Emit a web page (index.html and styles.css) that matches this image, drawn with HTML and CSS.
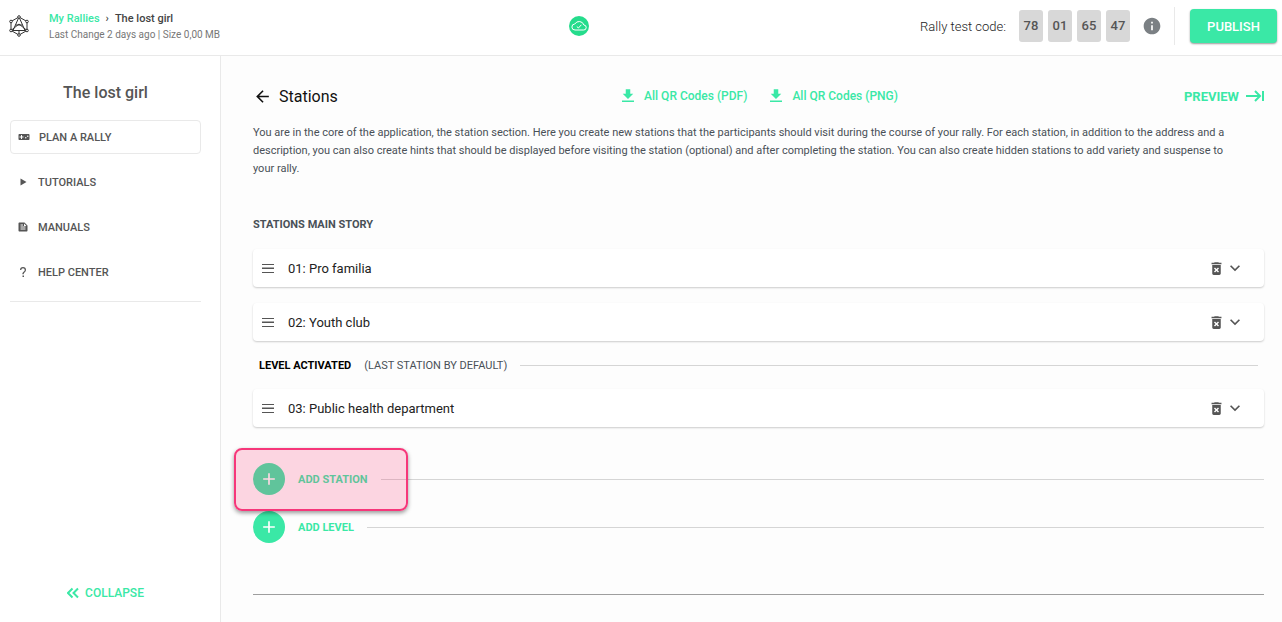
FILE: index.html
```html
<!DOCTYPE html>
<html lang="en">
<head>
    <meta charset="UTF-8">
    <meta name="viewport" content="width=device-width, initial-scale=1.0">
    <title>The lost girl - Stations</title>
    <link rel="stylesheet" href="styles.css">
</head>
<body>
    <!-- shared icons -->
    <svg class="sprite" aria-hidden="true">
        <symbol id="icon-download" viewBox="0 0 24 24"><path d="M19 9h-4V3H9v6H5l7 7 7-7zM4 18v2h16v-2H4z"/></symbol>
        <symbol id="icon-menu" viewBox="0 0 12 9"><path d="M0 0h12v1H0zM0 4h12v1H0zM0 8h12v1H0z"/><path opacity=".5" d="M0 3h12v1H0z"/></symbol>
        <symbol id="icon-delete" viewBox="0 0 24 24"><path d="M6 19c0 1.100.9 2 2 2h8c1.100 0 2-.9 2-2V7H6v12zm2.460-7.120 1.410-1.410L12 12.590l2.120-2.120 1.410 1.410L13.410 14l2.120 2.120-1.410 1.410L12 15.410l-2.120 2.120-1.410-1.410L10.590 14l-2.130-2.120zM15.500 4l-1-1h-5l-1 1H5v2h14V4z"/></symbol>
        <symbol id="icon-chevron" viewBox="0 0 24 24"><path d="M7.410 8.590 12 13.170l4.590-4.580L18 10l-6 6-6-6z"/></symbol>
        <symbol id="icon-plus" viewBox="0 0 24 24"><path d="M19 13h-6v6h-2v-6H5v-2h6V5h2v6h6z"/></symbol>
    </svg>

    <header class="topbar">
        <div class="topbar-left">
            <svg class="logo" viewBox="0 0 22 24" aria-hidden="true">
                <path d="M11 3 3 7.500v9L11 21l8-4.500v-9zM11 3 5 16.500M11 3l6 13.500M3 16.500h16M3 16.500 11 10l8 6.500M7.500 11h7M11 16.500V21"/>
                <g class="logo-nodes">
                    <circle cx="11" cy="3" r="1.300"/>
                    <circle cx="3" cy="7.500" r="1.300"/>
                    <circle cx="19" cy="7.500" r="1.300"/>
                    <circle cx="3" cy="16.500" r="1.300"/>
                    <circle cx="19" cy="16.500" r="1.300"/>
                    <circle cx="11" cy="21" r="1.300"/>
                </g>
            </svg>
            <div>
                <nav class="breadcrumb">
                    <a href="#">My Rallies</a>
                    <span class="separator">›</span>
                    <span>The lost girl</span>
                </nav>
                <div class="meta">Last Change 2 days ago | Size 0,00 MB</div>
            </div>
        </div>

        <svg class="saved" viewBox="0 0 20 20" role="img" aria-label="Saved">
            <circle cx="10" cy="10" r="10"/>
            <path d="M6 14h8.500a2.500 2.500 0 0 0 .4-5A5 5 0 0 0 5.800 8 3 3 0 0 0 6 14zM7.800 10.500l1.600 1.500 3-3.200"/>
        </svg>

        <div class="topbar-right">
            <span class="code-label">Rally test code:</span>
            <div class="code">
                <span>78</span>
                <span>01</span>
                <span>65</span>
                <span>47</span>
            </div>
            <button type="button" class="info" aria-label="Info">
                <svg viewBox="0 0 24 24"><path d="M12 2C6.480 2 2 6.480 2 12s4.480 10 10 10 10-4.480 10-10S17.520 2 12 2zm1 15h-2v-6h2v6zm0-8h-2V7h2v2z"/></svg>
            </button>
            <div class="publish-wrap">
                <button type="button" class="publish">PUBLISH</button>
            </div>
        </div>
    </header>

    <div class="layout">
        <aside class="sidebar">
            <h2>The lost girl</h2>
            <nav class="side-nav">
                <a href="#" class="active">
                    <svg viewBox="0 0 24 24"><path d="M21 6H3c-1.100 0-2 .9-2 2v8c0 1.100.9 2 2 2h18c1.100 0 2-.9 2-2V8c0-1.100-.9-2-2-2zm-10 7H8v3H6v-3H3v-2h3V8h2v3h3v2zm4.500 2a1.500 1.500 0 1 1 0-3 1.500 1.500 0 0 1 0 3zm4-3a1.500 1.500 0 1 1 0-3 1.500 1.500 0 0 1 0 3z"/></svg>
                    PLAN A RALLY
                </a>
                <a href="#">
                    <svg viewBox="0 0 24 24"><path d="M7 5v14l12-7z"/></svg>
                    TUTORIALS
                </a>
                <a href="#">
                    <svg viewBox="0 0 24 24"><path fill-rule="evenodd" d="M15 3H5c-1.100 0-2 .9-2 2v14c0 1.100.9 2 2 2h14c1.100 0 2-.9 2-2V9l-6-6zM7 7h5v2H7V7zm10 10H7v-2h10v2zm0-4H7v-2h10v2zm-3-3V5l5 5h-5z"/></svg>
                    MANUALS
                </a>
                <a href="#">
                    <svg viewBox="0 0 24 24"><path d="M11 19h3v3h-3zM12 2a6 6 0 0 0-6 6h2.500a3.500 3.500 0 0 1 7 0c0 3.500-4.800 3.500-4.800 8.500h2.600c0-4 4.700-4.500 4.700-8.500a6 6 0 0 0-6-6z"/></svg>
                    HELP CENTER
                </a>
            </nav>
            <button type="button" class="collapse">
                <svg viewBox="0 0 12 12" aria-hidden="true"><path d="M5.500 1.500 1 6l4.500 4.500M11 1.500 6.500 6l4.500 4.500"/></svg>
                COLLAPSE
            </button>
        </aside>

        <main class="content">
            <div class="title-row">
                <h1>
                    <a href="#" aria-label="Back"><svg viewBox="0 0 24 24"><path d="M20 11H7.830l5.590-5.590L12 4l-8 8 8 8 1.410-1.410L7.830 13H20v-2z"/></svg></a>
                    Stations
                </h1>
                <div class="downloads">
                    <a href="#"><svg><use href="#icon-download"/></svg>All QR Codes (PDF)</a>
                    <a href="#"><svg><use href="#icon-download"/></svg>All QR Codes (PNG)</a>
                </div>
                <a href="#" class="preview">PREVIEW <svg viewBox="0 0 18 12" aria-hidden="true"><path d="M0 6h14M9 1l5 5-5 5M17 1v10"/></svg></a>
            </div>

            <p class="description">You are in the core of the application, the station section. Here you create new stations that the participants should visit during the course of your rally. For each station, in addition to the address and a description, you can also create hints that should be displayed before visiting the station (optional) and after completing the station. You can also create hidden stations to add variety and suspense to your rally.</p>

            <h3>STATIONS MAIN STORY</h3>

            <div class="stations">
                <div class="station">
                    <svg class="handle"><use href="#icon-menu"/></svg>
                    <span class="name">01: Pro familia</span>
                    <button type="button" aria-label="Delete"><svg><use href="#icon-delete"/></svg></button>
                    <button type="button" class="expand" aria-label="Expand"><svg><use href="#icon-chevron"/></svg></button>
                </div>
                <div class="station">
                    <svg class="handle"><use href="#icon-menu"/></svg>
                    <span class="name">02: Youth club</span>
                    <button type="button" aria-label="Delete"><svg><use href="#icon-delete"/></svg></button>
                    <button type="button" class="expand" aria-label="Expand"><svg><use href="#icon-chevron"/></svg></button>
                </div>
                <div class="level">
                    <strong>LEVEL ACTIVATED</strong>
                    <span>(LAST STATION BY DEFAULT)</span>
                </div>
                <div class="station">
                    <svg class="handle"><use href="#icon-menu"/></svg>
                    <span class="name">03: Public health department</span>
                    <button type="button" aria-label="Delete"><svg><use href="#icon-delete"/></svg></button>
                    <button type="button" class="expand" aria-label="Expand"><svg><use href="#icon-chevron"/></svg></button>
                </div>
            </div>

            <div class="add-list">
                <div class="add-row highlighted">
                    <button type="button"><span class="circle"><svg><use href="#icon-plus"/></svg></span>ADD STATION</button>
                </div>
                <div class="add-row">
                    <button type="button"><span class="circle"><svg><use href="#icon-plus"/></svg></span>ADD LEVEL</button>
                </div>
            </div>

            <hr>
        </main>
    </div>
</body>
</html>
```
FILE: styles.css
```css
*, *::before, *::after {
    box-sizing: border-box;
}
body {
    margin: 0;
    min-height: 100vh;
    display: flex;
    flex-direction: column;
    font-family: Roboto, "Liberation Sans", sans-serif;
    font-size: 11px;
    color: #495057;
    background-color: #fff;
}
a {
    color: #3ae8a6;
    text-decoration: none;
}
button {
    font: inherit;
    color: inherit;
    background: none;
    border: none;
    padding: 0;
    cursor: pointer;
}
svg {
    display: block;
    fill: currentColor;
}
.sprite {
    display: none;
}

/* top bar */
.topbar {
    height: 56px;
    display: grid;
    grid-template-columns: 1fr auto 1fr;
    align-items: center;
    padding: 0 5px 3px 8px;
    border-bottom: 1px solid #e9e9e9;
}
.topbar-left {
    display: flex;
    align-items: center;
    gap: 19px;
}
.logo {
    width: 22px;
    height: 24px;
    fill: none;
    stroke: #333;
}
.logo-nodes {
    fill: #fff;
}
.breadcrumb {
    display: flex;
    gap: 6px;
    padding-top: 2px;
    line-height: 16px;
    font-weight: 500;
    color: #444;
}
.meta {
    font-size: 10px;
    line-height: 16px;
    color: #777;
}
.saved {
    width: 20px;
    height: 20px;
    margin-right: 128px;
    fill: #25dc8c;
}
.saved path {
    fill: none;
    stroke: #fff;
}
.topbar-right {
    display: flex;
    align-items: center;
    justify-content: flex-end;
}
.code-label {
    font-size: 13px;
    font-weight: 300;
    color: #222;
}
.code {
    display: flex;
    gap: 5px;
    margin: 0 12px 0 13px;
}
.code span {
    width: 24px;
    height: 32px;
    line-height: 32px;
    border-radius: 3px;
    text-align: center;
    font-size: 13px;
    font-weight: 500;
    color: #555;
    background-color: #d8d8d8;
}
.info svg {
    width: 20px;
    height: 20px;
    color: #7b8084;
}
.publish-wrap {
    margin-left: 12px;
    padding: 2px 0 2px 15px;
    border-left: 1px solid #e9e9e9;
}
.publish {
    width: 87px;
    height: 34px;
    border-radius: 4px;
    font-size: 13px;
    font-weight: 500;
    color: #fff;
    background-color: #3ae8a6;
    box-shadow: 0 1px 2px rgba(0,0,0,0.4);
}

.layout {
    flex: 1;
    display: flex;
}

/* sidebar */
.sidebar {
    width: 221px;
    flex-shrink: 0;
    display: flex;
    flex-direction: column;
    padding: 27px 19px 21px 10px;
    border-right: 1px solid #e9e9e9;
}
.sidebar h2 {
    margin: 0 0 17px;
    font-size: 16px;
    line-height: 20px;
    font-weight: 500;
    text-align: center;
    color: #555;
}
.side-nav {
    display: flex;
    flex-direction: column;
    gap: 11px;
    padding-bottom: 12px;
    border-bottom: 1px solid #e9e9e9;
}
.side-nav a {
    display: flex;
    align-items: center;
    gap: 9px;
    height: 34px;
    padding: 0 7px;
    font-weight: 500;
    color: #555;
}
.side-nav .active {
    border: 1px solid #e9e9e9;
    border-radius: 4px;
}
.side-nav svg {
    width: 12px;
    height: 12px;
}
.collapse {
    display: flex;
    align-items: center;
    gap: 6px;
    margin: auto auto 0;
    font-size: 12px;
    line-height: 16px;
    font-weight: 500;
    color: #3ae8a6;
}
.collapse svg {
    width: 12px;
    height: 12px;
    fill: none;
    stroke: currentColor;
    stroke-width: 2;
}

/* content */
.content {
    flex: 1;
    padding: 28px 18px 20px 32px;
    background-color: #fdfdfd;
}
.title-row {
    display: grid;
    grid-template-columns: 1fr auto 1fr;
    align-items: center;
    height: 24px;
}
h1 {
    display: flex;
    align-items: center;
    gap: 7px;
    margin: 0;
    font-size: 16px;
    font-weight: 400;
    color: #111;
}
h1 svg {
    width: 19px;
    height: 19px;
    color: #111;
}
.downloads {
    display: flex;
    gap: 20px;
}
.downloads a {
    display: flex;
    align-items: center;
    gap: 7px;
    font-size: 12px;
    font-weight: 500;
}
.downloads svg {
    width: 18px;
    height: 18px;
}
.preview {
    display: flex;
    align-items: center;
    justify-self: end;
    gap: 7px;
    font-size: 13px;
    font-weight: 700;
}
.preview svg {
    width: 18px;
    height: 12px;
    fill: none;
    stroke: currentColor;
    stroke-width: 2;
}
.description {
    margin: 16px 0 39px;
    padding-right: 20px;
    line-height: 18px;
}
h3 {
    margin: 0 0 16px;
    font-size: 11px;
    line-height: 16px;
    font-weight: 700;
}
.station {
    display: flex;
    align-items: center;
    height: 38px;
    margin-bottom: 16px;
    padding: 0 19px 0 9px;
    border-radius: 4px;
    color: #555;
    background-color: #fff;
    box-shadow: 0 1px 2px rgba(0,0,0,0.2);
}
.station .handle {
    width: 12px;
    height: 9px;
    margin-right: 14px;
}
.station .name {
    flex: 1;
    font-size: 13px;
    color: #222;
}
.station button svg {
    width: 17px;
    height: 17px;
}
.station .expand svg {
    width: 20px;
    height: 20px;
}
.level {
    display: flex;
    align-items: center;
    gap: 13px;
    height: 16px;
    margin-bottom: 16px;
    padding: 0 6px;
}
.level strong {
    color: #000;
}
.level::after,
.add-row::after {
    content: "";
    flex: 1;
    height: 1px;
    background-color: #d5d5d5;
}
.add-list {
    display: flex;
    flex-direction: column;
    gap: 16px;
    padding-top: 20px;
}
.add-row {
    position: relative;
    display: flex;
    align-items: center;
    gap: 13px;
}
.add-row button {
    display: flex;
    align-items: center;
    gap: 13px;
    font-weight: 700;
    color: #3ae8a6;
}
.circle {
    display: grid;
    place-items: center;
    width: 32px;
    height: 32px;
    border-radius: 50%;
    color: #fff;
    background-color: #3ae8a6;
}
.circle svg {
    width: 20px;
    height: 20px;
}
/* callout box around the add button */
.highlighted::before {
    content: "";
    position: absolute;
    z-index: 1;
    top: -15px;
    left: -19px;
    width: 174px;
    height: 63px;
    border: 2px solid #f6377a;
    border-radius: 8px;
    background-color: rgba(249,55,114,0.2);
    box-shadow: 0 2px 4px rgba(0,0,0,0.4);
    pointer-events: none;
}
hr {
    margin: 51px 0 0;
    border: none;
    border-top: 1px solid #9e9e9e;
}
```
